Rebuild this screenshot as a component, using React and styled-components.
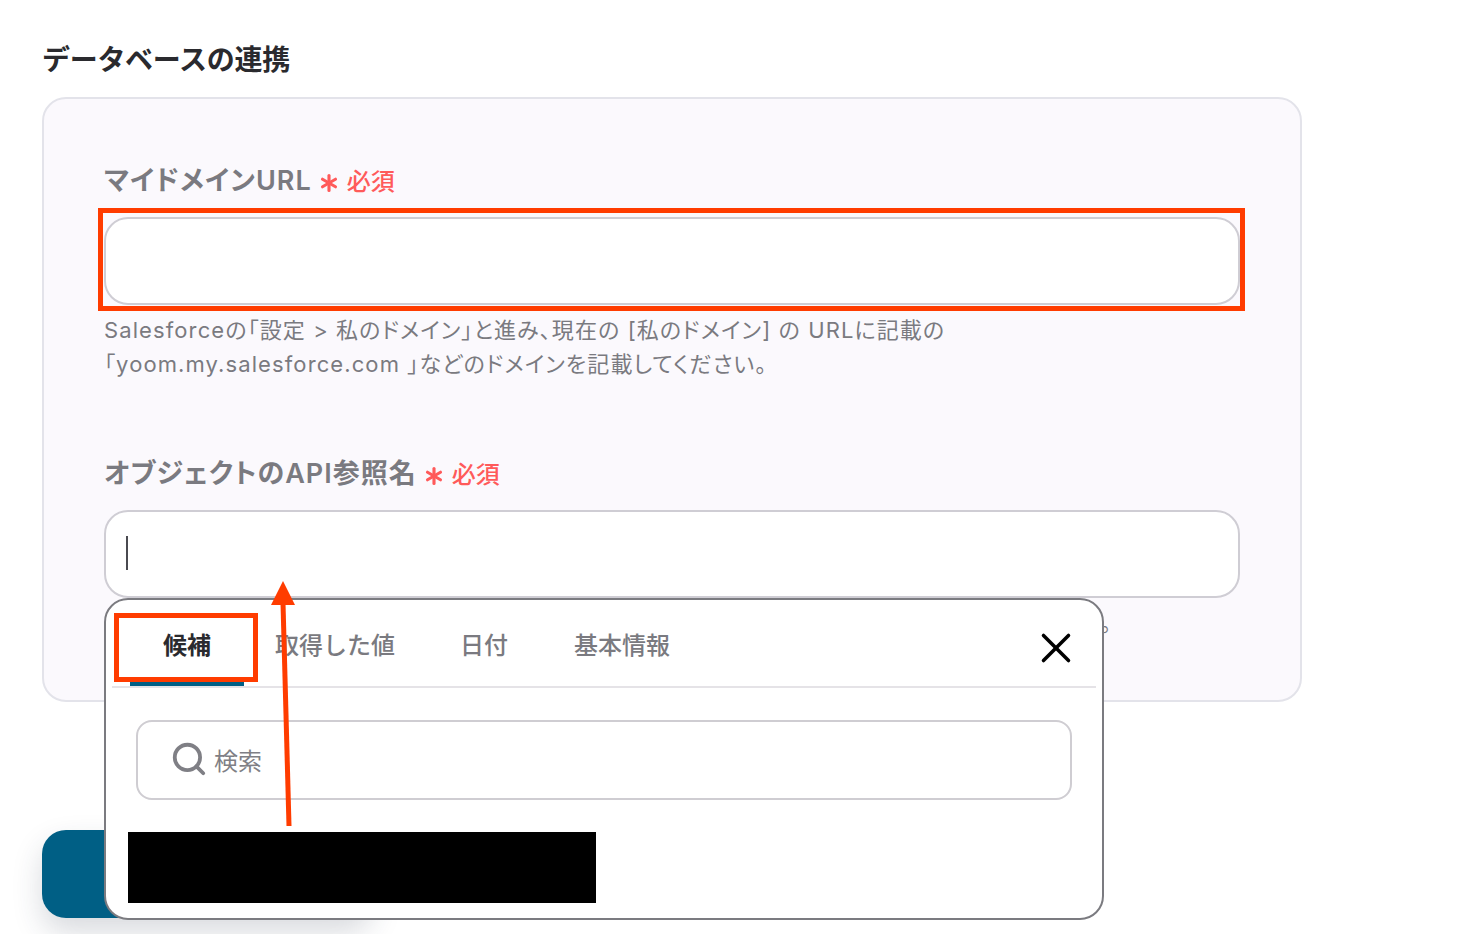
import React from 'react'
import styled, { createGlobalStyle } from 'styled-components'
import { Asterisk, Search, X } from 'lucide-react'

const Global = createGlobalStyle`
  html, body { margin: 0; background: #fff; }
  body { font-family: Inter, "Noto Sans CJK JP", sans-serif; }
`

const Page = styled.div`
  position: relative;
  width: 1484px;
  height: 934px;
  overflow: hidden;
  box-sizing: border-box;
  padding: 40px 0 0 42px;
`
const Heading = styled.h2`
  margin: 0 0 17px;
  font-size: 28px;
  line-height: 40px;
  font-weight: 600;
  letter-spacing: -0.3px;
  color: #2a2a2e;
`
const Card = styled.div`
  box-sizing: border-box;
  width: 1260px;
  height: 605px;
  padding: 63px 60px 0;
  background: #fbf9fd;
  border: 2px solid #e3e3ea;
  border-radius: 24px;
`
const Field = styled.div`
  margin-top: ${p => p.$top || 0}px;
`
const Label = styled.div`
  box-sizing: border-box;
  display: flex;
  align-items: center;
  height: 36px;
  padding-bottom: 4px;
  margin-bottom: 19px;
  font-size: 27px;
  font-weight: 600;
  letter-spacing: 1px;
  font-feature-settings: "palt";
  color: #7a7a80;
`
const Required = styled.span`
  display: inline-flex;
  align-items: center;
  margin: 3px 0 0 2px;
  font-size: 24px;
  font-weight: 500;
  letter-spacing: 0;
  color: #ff5a5a;
  svg { margin: 6px 3px 0 0; }
`
const InputWrap = styled.div`
  position: relative;
  width: 1136px;
`
const Input = styled.div`
  box-sizing: border-box;
  display: flex;
  align-items: center;
  height: 88px;
  padding-left: 20px;
  background: #fff;
  border: 2px solid #cfcdd4;
  border-radius: 24px;
`
const Caret = styled.span`
  width: 2px;
  height: 34px;
  margin-bottom: 2px;
  background: #4a4a50;
`
const Help = styled.p`
  margin: 8px 0 0;
  font-size: 22px;
  line-height: 34px;
  letter-spacing: 1.1px;
  font-feature-settings: "palt";
  color: #7a7a80;
  white-space: nowrap;
`
const HiddenHelp = styled(Help)`
  padding-left: 996px;
`
const Highlight = styled.div`
  position: absolute;
  top: -9px;
  left: -6px;
  right: -5px;
  bottom: -6px;
  border: 5px solid #ff3c00;
  pointer-events: none;
`
const Popover = styled.div`
  position: absolute;
  z-index: 2;
  top: 100%;
  left: 0;
  box-sizing: border-box;
  width: 1000px;
  height: 322px;
  padding: 0 6px;
  background: #fff;
  border: 2px solid #7b7b80;
  border-radius: 24px;
`
const TabBar = styled.div`
  display: flex;
  align-items: stretch;
  height: 88px;
  box-sizing: border-box;
  border-bottom: 2px solid #e5e3e7;
`
const Tab = styled.div`
  position: relative;
  box-sizing: border-box;
  flex: none;
  width: ${p => p.$width}px;
  margin-left: ${p => p.$left || 0}px;
  padding-top: 28px;
  text-align: center;
  white-space: nowrap;
  font-size: 24px;
  line-height: 36px;
  font-weight: ${p => (p.$active ? 700 : 500)};
  color: ${p => (p.$active ? '#2a2a2e' : '#7a7a80')};
  ${p => p.$active && `
    &::after {
      content: '';
      position: absolute;
      left: 0;
      right: 0;
      bottom: 0;
      height: 6px;
      background: #005f85;
    }
  `}
`
const TabMark = styled.div`
  position: absolute;
  z-index: 3;
  top: 13px;
  left: 8px;
  box-sizing: border-box;
  width: 144px;
  height: 69px;
  border: 5px solid #ff3c00;
`
const CloseBtn = styled.div`
  display: flex;
  height: 50px;
  margin: 23px 15px 0 auto;
  color: #000;
`
const SearchBox = styled.div`
  box-sizing: border-box;
  display: flex;
  align-items: center;
  gap: 6px;
  width: 936px;
  height: 80px;
  margin: 32px 0 0 24px;
  padding: 0 0 2px 32px;
  border: 2px solid #cfcdd2;
  border-radius: 16px;
  font-size: 24px;
  color: #7f7f85;
`
const Redacted = styled.div`
  width: 468px;
  height: 71px;
  margin: 32px 0 0 16px;
  background: #000;
`
const Submit = styled.div`
  width: 330px;
  height: 88px;
  margin-top: 128px;
  background: #005f85;
  border-radius: 24px;
  box-shadow: 0 14px 30px rgba(40, 50, 70, 0.18);
`
const ArrowLayer = styled.svg`
  position: absolute;
  z-index: 4;
  top: 575px;
  left: 260px;
`

const App = () => {
  return (
    <Page>
      <Global />
      <Heading>データベースの連携</Heading>
      <Card>
        <Field>
          <Label>
            マイドメインURL
            <Required><Asterisk size={30} strokeWidth={2.5} />必須</Required>
          </Label>
          <InputWrap>
            <Input />
            <Highlight />
          </InputWrap>
          <Help>
            Salesforceの「設定 &gt; 私のドメイン」と進み、現在の [私のドメイン] の URLに記載の<br />
            「yoom.my.salesforce.com 」などのドメインを記載してください。
          </Help>
        </Field>
        <Field $top={74}>
          <Label>
            オブジェクトのAPI参照名
            <Required><Asterisk size={30} strokeWidth={2.5} />必須</Required>
          </Label>
          <InputWrap>
            <Input><Caret /></Input>
            <Popover>
              <TabBar>
                <Tab $active $width={114} $left={18}>候補</Tab>
                <Tab $width={118} $left={31}>取得した値</Tab>
                <Tab $width={48} $left={67}>日付</Tab>
                <Tab $width={98} $left={65}>基本情報</Tab>
                <CloseBtn><X size={50} strokeWidth={1.7} /></CloseBtn>
              </TabBar>
              <TabMark />
              <SearchBox>
                <Search size={38} color="#7f7f85" strokeWidth={2.4} />
                検索
              </SearchBox>
              <Redacted />
            </Popover>
          </InputWrap>
          <HiddenHelp>。</HiddenHelp>
        </Field>
      </Card>
      <Submit />
      <ArrowLayer width="50" height="260" viewBox="0 0 50 260" fill="none">
        <path d="M23 28 L29 251" stroke="#ff3c00" strokeWidth="5" />
        <polygon points="23,6 11,30 35,30" fill="#ff3c00" />
      </ArrowLayer>
    </Page>
  )
}

export default App
